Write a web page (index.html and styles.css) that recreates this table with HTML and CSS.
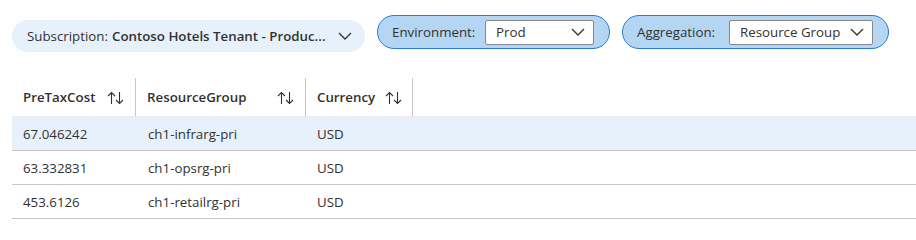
FILE: index.html
```html
<!DOCTYPE html>
<html>
<head>
<meta charset="utf-8">
<link rel="stylesheet" href="styles.css">
</head>
<body>
<div class="toolbar">
  <div class="pill pill-sub">
    <span class="lbl">Subscription:</span>
    <span class="val">Contoso Hotels Tenant - Produc...</span>
    <svg class="chev" width="14" height="8" viewBox="0 0 14 8"><path d="M1 1 L7 7 L13 1" fill="none" stroke="#323130" stroke-width="1.3"/></svg>
  </div>
  <div class="pill pill-sel pill-env">
    <span class="lbl">Environment:</span>
    <div class="select sel-env">
      <span>Prod</span>
      <svg class="chev" width="14" height="8" viewBox="0 0 14 8"><path d="M1 1 L7 7 L13 1" fill="none" stroke="#323130" stroke-width="1.3"/></svg>
    </div>
  </div>
  <div class="pill pill-sel pill-agg">
    <span class="lbl">Aggregation:</span>
    <div class="select sel-agg">
      <span>Resource Group</span>
      <svg class="chev" width="14" height="8" viewBox="0 0 14 8"><path d="M1 1 L7 7 L13 1" fill="none" stroke="#323130" stroke-width="1.3"/></svg>
    </div>
  </div>
</div>

<table class="grid">
  <thead>
    <tr>
      <th class="c1 div"><div class="hc"><span>PreTaxCost</span><svg class="sort" width="18" height="14" viewBox="0 0 18 14"><path d="M4.5 13 V1.5 M1 5 L4.5 1.5 L8 5 M12.5 1 V12.5 M9 9 L12.5 12.5 L16 9" fill="none" stroke="#323130" stroke-width="1.1"/></svg></div></th>
      <th class="c2 div"><div class="hc"><span>ResourceGroup</span><svg class="sort" width="18" height="14" viewBox="0 0 18 14"><path d="M4.5 13 V1.5 M1 5 L4.5 1.5 L8 5 M12.5 1 V12.5 M9 9 L12.5 12.5 L16 9" fill="none" stroke="#323130" stroke-width="1.1"/></svg></div></th>
      <th class="c3 div"><div class="hc"><span>Currency</span><svg class="sort" width="18" height="14" viewBox="0 0 18 14"><path d="M4.5 13 V1.5 M1 5 L4.5 1.5 L8 5 M12.5 1 V12.5 M9 9 L12.5 12.5 L16 9" fill="none" stroke="#323130" stroke-width="1.1"/></svg></div></th>
      <th class="c4"></th>
    </tr>
  </thead>
  <tbody>
    <tr class="sel"><td class="d1">67.046242</td><td class="d2">ch1-infrarg-pri</td><td class="d3">USD</td><td></td></tr>
    <tr><td class="d1">63.332831</td><td class="d2">ch1-opsrg-pri</td><td class="d3">USD</td><td></td></tr>
    <tr><td class="d1">453.6126</td><td class="d2">ch1-retailrg-pri</td><td class="d3">USD</td><td></td></tr>
  </tbody>
</table>
</body>
</html>
```

FILE: styles.css
```css
html, body {
  margin: 0;
  padding: 0;
  background: #ffffff;
}
body {
  font-family: "Open Sans", "Noto Sans", sans-serif;
  font-size: 13.3px;
  color: #323130;
}
.toolbar {
  display: flex;
  align-items: flex-start;
  gap: 12px;
  padding: 15px 0 0 12px;
  height: 63px;
  box-sizing: border-box;
}
.pill {
  display: flex;
  align-items: center;
  border-radius: 17px;
  box-sizing: border-box;
}
.pill-sub {
  margin-top: 5px;
  height: 32px;
  width: 353px;
  padding: 0 13px 0 15px;
  background: #e6f1fb;
}
.pill-sub .val {
  font-weight: 600;
  margin-left: 4px;
  white-space: nowrap;
}
.pill-sub .chev {
  margin-left: auto;
}
.pill-sel {
  height: 34px;
  padding: 0 15px 0 14px;
  background: #b4d6f3;
  border: 1px solid #2a7ad6;
  justify-content: space-between;
}
.pill-env { width: 233px; }
.pill-agg { width: 267px; }
.lbl {
  white-space: nowrap;
}
.select {
  display: flex;
  align-items: center;
  justify-content: space-between;
  height: 25px;
  box-sizing: border-box;
  padding: 0 8px 0 10px;
  background: #ffffff;
  border: 1px solid #8a8886;
  border-radius: 2px;
}
.sel-env { width: 109px; }
.sel-agg { width: 144px; }
.select span { white-space: nowrap; }

.grid {
  margin: 15px 0 0 12px;
  width: 904px;
  border-collapse: separate;
  border-spacing: 0;
  table-layout: fixed;
}
.grid th {
  height: 38px;
  padding: 0;
  text-align: left;
  font-weight: 600;
  border-bottom: 1px solid #edebe9;
}
.grid th.div {
  border-right: 1px solid #c8c6c4;
}
.c1 { width: 123px; }
.c2 { width: 169px; }
.c3 { width: 106px; }
.hc {
  display: flex;
  align-items: center;
  justify-content: space-between;
  padding: 0 10px 0 11px;
  white-space: nowrap;
}
.c3 .hc { justify-content: flex-start; gap: 10px; }
.sort { flex: none; margin-top: 1px; }
.grid td {
  height: 33px;
  padding: 0;
  border-bottom: 1px solid #c8c6c4;
  white-space: nowrap;
}
.grid tr.sel td {
  background: #e6f1fb;
}
.d1 { padding-left: 11px !important; }
.d2 { padding-left: 12px !important; }
.d3 { padding-left: 11px !important; }
```
